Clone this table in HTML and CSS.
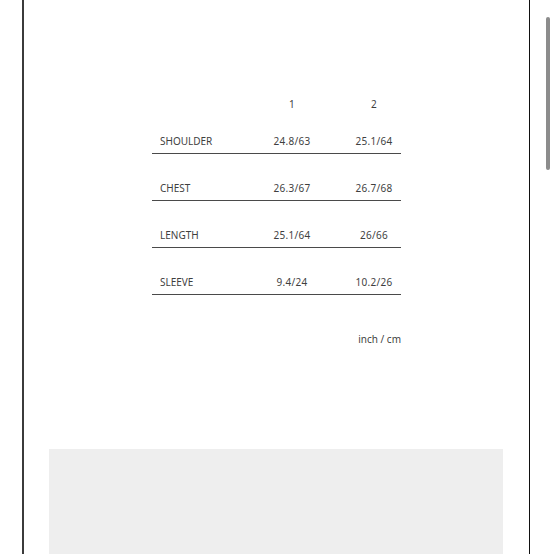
FILE: index.html
```html
<!DOCTYPE html>
<html>
<head>
<meta charset="utf-8">
<link rel="stylesheet" href="styles.css">
</head>
<body>
<div class="page">
  <div class="frame">
    <div class="size-table">
      <div class="row head">
        <span></span><span>1</span><span>2</span>
      </div>
      <div class="row">
        <span class="label">SHOULDER</span><span>24.8/63</span><span>25.1/64</span>
      </div>
      <div class="row">
        <span class="label">CHEST</span><span>26.3/67</span><span>26.7/68</span>
      </div>
      <div class="row">
        <span class="label">LENGTH</span><span>25.1/64</span><span>26/66</span>
      </div>
      <div class="row">
        <span class="label">SLEEVE</span><span>9.4/24</span><span>10.2/26</span>
      </div>
      <div class="unit">inch / cm</div>
    </div>
    <div class="gray-box"></div>
  </div>
  <div class="scrollbar"></div>
</div>
</body>
</html>
```
FILE: styles.css
```css
html, body {
  margin: 0;
  padding: 0;
  background: #fff;
}
.page {
  position: relative;
  width: 554px;
  height: 554px;
  overflow: hidden;
  font-family: "Noto Sans", "Open Sans", sans-serif;
  color: #3f3f3f;
}
.frame {
  margin-left: 22px;
  width: 505px;
  height: 554px;
  border-left: 2px solid #3b3b3b;
  border-right: 1px solid #111;
  display: flex;
  flex-direction: column;
  align-items: center;
}
.size-table {
  width: 249px;
  padding-top: 98px;
  display: flex;
  flex-direction: column;
}
.row {
  display: grid;
  grid-template-columns: 85px 110px 54px;
  font-size: 10px;
  line-height: 12px;
  letter-spacing: 0.3px;
  padding: 28px 0 6px;
  border-bottom: 1px solid #4a4a4a;
}
.row span {
  text-align: center;
}
.row .label {
  text-align: left;
  padding-left: 8px;
  letter-spacing: 0;
}
.row.head {
  padding: 0;
  margin-bottom: -3px;
  border-bottom: none;
}
.unit {
  margin-top: 38px;
  text-align: right;
  font-size: 10px;
  line-height: 12px;
}
.gray-box {
  margin-top: 104px;
  align-self: flex-start;
  margin-left: 25px;
  width: 454px;
  flex: 1;
  background: #eeeeee;
}
.scrollbar {
  position: absolute;
  left: 546px;
  top: 17px;
  width: 4px;
  height: 153px;
  border-radius: 2px;
  background: #8c8c8c;
}
```
